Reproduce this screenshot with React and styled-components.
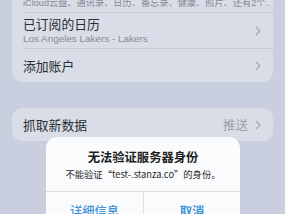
import React from 'react';
import styled, { createGlobalStyle } from 'styled-components';

const GlobalStyle = createGlobalStyle`
  html, body {
    margin: 0;
    padding: 0;
    background: #c9cfdf;
    overflow: hidden;
  }
  body {
    font-family: "Noto Sans CJK SC", "Liberation Sans", sans-serif;
    -webkit-font-smoothing: antialiased;
  }
`;

const Screen = styled.div`
  position: relative;
  width: 285px;
  height: 214px;
  overflow: hidden;
  background: #c9cfdf;
`;

const Page = styled.div`
  display: flex;
  flex-direction: column;
  gap: 26px;
  padding: 0 12px;
  margin-top: -24px;
`;

const Card = styled.section`
  background: #d8dde7;
  border-radius: 10px;
  overflow: hidden;
`;

const Row = styled.div`
  display: flex;
  align-items: center;
  height: ${p => p.h}px;
  margin-left: 11px;
  padding-right: ${p => (p.wide ? 2 : 12)}px;
  box-sizing: border-box;
  border-bottom: ${p => (p.last ? 'none' : '1px solid #c5cad4')};
`;

const Texts = styled.div`
  flex: 1;
  min-width: 0;
  display: flex;
  flex-direction: column;
  gap: 1px;
`;

const Title = styled.div`
  font-size: 12.8px;
  line-height: 16px;
  color: #2b2d33;
  white-space: nowrap;
`;

const Sub = styled.div`
  font-family: "Liberation Sans", "Noto Sans CJK SC", sans-serif;
  font-size: ${p => (p.latin ? 9.9 : 9.2)}px;
  line-height: 12px;
  color: #868b95;
  white-space: nowrap;
  overflow: hidden;
`;

const Detail = styled.span`
  font-size: 12.5px;
  color: #9a9ea8;
  margin-right: 7px;
`;

const Alert = styled.div`
  position: absolute;
  left: 46px;
  top: 137px;
  width: 194px;
  background: #fafbfc;
  border-radius: 11px;
  overflow: hidden;
  display: flex;
  flex-direction: column;
`;

const AlertBody = styled.div`
  display: flex;
  flex-direction: column;
  align-items: center;
  padding: 12px 8px 0;
  height: 55px;
  box-sizing: border-box;
  border-bottom: 1px solid #dcdee2;
`;

const AlertTitle = styled.div`
  font-size: 12.3px;
  font-weight: 700;
  line-height: 16px;
  color: #1d1e21;
`;

const AlertMsg = styled.div`
  font-size: 9.3px;
  line-height: 14px;
  margin-top: 2px;
  color: #2a2b2f;
  white-space: nowrap;
`;

const Buttons = styled.div`
  display: grid;
  grid-template-columns: 1fr 1fr;
  height: 38px;
`;

const Button = styled.div`
  display: flex;
  align-items: center;
  justify-content: center;
  font-size: 12.3px;
  color: #3f93d6;
  font-weight: ${p => (p.bold ? 700 : 500)};
  border-left: ${p => (p.divider ? '1px solid #dcdee2' : 'none')};
`;

const Chevron = () => (
  <svg width="6" height="10" viewBox="0 0 6 10">
    <polyline points="1.2,1.2 4.8,5 1.2,8.8" fill="none" stroke="#a8acb5" strokeWidth="1.4" strokeLinecap="round" strokeLinejoin="round" />
  </svg>
);

export default function App() {
  return (
    <Screen>
      <GlobalStyle />
      <Page>
        <Card>
          <Row h={37} wide>
            <Texts>
              <Title>iCloud</Title>
              <Sub>iCloud云盘、通讯录、日历、备忘录、健康、照片、还有2个...</Sub>
            </Texts>
          </Row>
          <Row h={36}>
            <Texts>
              <Title>已订阅的日历</Title>
              <Sub latin>Los Angeles Lakers - Lakers</Sub>
            </Texts>
            <Chevron />
          </Row>
          <Row h={33} last>
            <Texts>
              <Title>添加账户</Title>
            </Texts>
            <Chevron />
          </Row>
        </Card>
        <Card>
          <Row h={33} last>
            <Texts>
              <Title>抓取新数据</Title>
            </Texts>
            <Detail>推送</Detail>
            <Chevron />
          </Row>
        </Card>
      </Page>
      <Alert>
        <AlertBody>
          <AlertTitle>无法验证服务器身份</AlertTitle>
          <AlertMsg>不能验证“test-.stanza.co”的身份。</AlertMsg>
        </AlertBody>
        <Buttons>
          <Button>详细信息</Button>
          <Button divider bold>取消</Button>
        </Buttons>
      </Alert>
    </Screen>
  );
}
